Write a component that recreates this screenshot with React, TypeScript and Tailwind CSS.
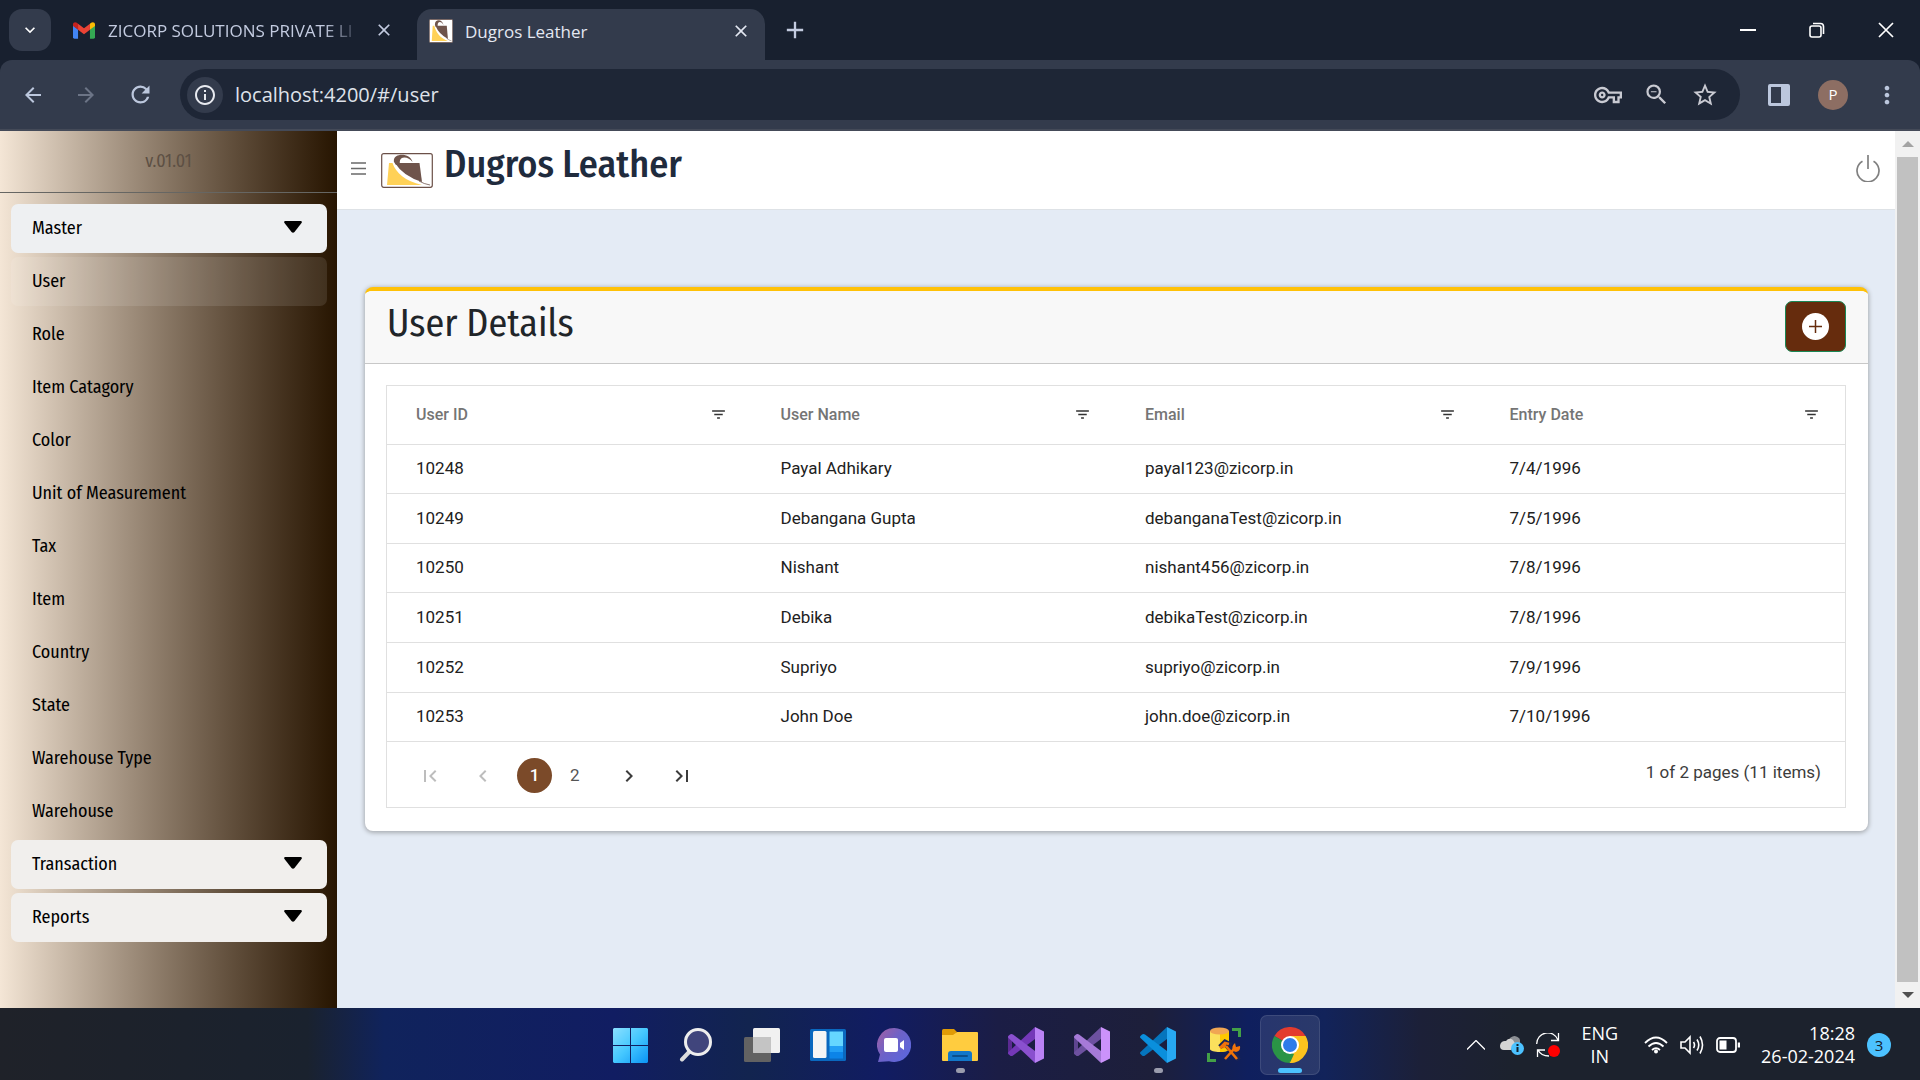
import React from "react";
import {
  MdArrowBack,
  MdArrowForward,
  MdRefresh,
  MdOutlineVpnKey,
  MdZoomOut,
  MdStarOutline,
  MdFilterList,
  MdFirstPage,
  MdChevronLeft,
  MdChevronRight,
  MdLastPage,
  MdClose,
  MdAdd,
  MdInfoOutline,
  MdMoreVert,
  MdKeyboardArrowDown,
} from "react-icons/md";

const masterItems = [
  "User",
  "Role",
  "Item Catagory",
  "Color",
  "Unit of Measurement",
  "Tax",
  "Item",
  "Country",
  "State",
  "Warehouse Type",
  "Warehouse",
];

const columns = ["User ID", "User Name", "Email", "Entry Date"];

const users = [
  ["10248", "Payal Adhikary", "payal123@zicorp.in", "7/4/1996"],
  ["10249", "Debangana Gupta", "debanganaTest@zicorp.in", "7/5/1996"],
  ["10250", "Nishant", "nishant456@zicorp.in", "7/8/1996"],
  ["10251", "Debika", "debikaTest@zicorp.in", "7/8/1996"],
  ["10252", "Supriyo", "supriyo@zicorp.in", "7/9/1996"],
  ["10253", "John Doe", "john.doe@zicorp.in", "7/10/1996"],
];

function BagMark({ className }: { className: string }) {
  return (
    <svg viewBox="0 0 52 35" preserveAspectRatio="none" className={className} aria-hidden="true">
      <rect x="0.7" y="0.7" width="50.6" height="33.6" rx="2" fill="#fff" stroke="#6b5048" strokeWidth="1.2" />
      <path d="M14 10 L38.500 10 L41 29 Q22 23 14 10Z" fill="#6f544b" />
      <path d="M13 9 C11 0 29 -1 31.500 9 C27 2.500 17 3 19 11 L15 12Z" fill="#6f544b" />
      <path d="M8 10 L11.500 10 C15 20 24 28 41 32 L6 32Z" fill="#ffd157" />
      <path d="M38 28 Q43 31 49 32" fill="none" stroke="#6f544b" strokeWidth="0.8" />
    </svg>
  );
}

function GmailMark() {
  return (
    <svg viewBox="0 0 24 18" className="h-[17px] w-[22px] shrink-0" aria-hidden="true">
      <path d="M0 3v13.400a1.600 1.600 0 0 0 1.600 1.600H5.500V8Z" fill="#4285f4" />
      <path d="M24 3v13.400a1.600 1.600 0 0 1-1.600 1.600H18.500V8Z" fill="#34a853" />
      <path d="M18.500 1.600V8.300L24 4.200V2.200C24 0 21.400-.8 19.800.6Z" fill="#fbbc04" />
      <path d="M5.500 8.300V1.600L12 6.500l6.500-4.900v6.700L12 13.200Z" fill="#ea4335" />
      <path d="M0 2.200v2l5.500 4.100V1.600L4.200.6C2.600-.7 0 0 0 2.200Z" fill="#c5221f" />
    </svg>
  );
}

function TabStrip() {
  return (
    <div className="flex h-[60px] items-stretch bg-[#18202f] text-[#c3cbe0]">
      <button aria-label="Search tabs" className="mx-[9px] my-[9px] flex size-[42px] shrink-0 items-center justify-center rounded-[13px] bg-[#333b4c] text-white">
        <MdKeyboardArrowDown className="size-5" />
      </button>
      <div className="flex w-[357px] shrink-0 items-center pl-[13px] pr-[22px]">
        <GmailMark />
        <span className="ml-[13px] w-[254px] shrink-0 whitespace-nowrap pt-0.5 text-[17px] mask-r-from-85%">
          ZICORP SOLUTIONS PRIVATE LI
        </span>
        <button aria-label="Close tab" className="ml-3">
          <MdClose className="size-5" />
        </button>
      </div>
      <div className="mt-[9px] flex w-[348px] shrink-0 items-center rounded-t-[15px] bg-[#333b4c] px-3 pb-2 text-[#e4e8f2]">
        <BagMark className="h-6 w-6" />
        <span className="ml-3 grow pt-0.5 text-[17px] leading-6">Dugros Leather</span>
        <button aria-label="Close tab" className="mr-0.5">
          <MdClose className="size-5" />
        </button>
      </div>
      <button aria-label="New tab" className="ml-4 flex items-center">
        <MdAdd className="size-7" />
      </button>
      <div className="ml-auto flex items-center text-white">
        <button aria-label="Minimize" className="flex w-[69px] justify-center">
          <svg viewBox="0 0 16 16" className="size-4"><path d="M0 8h16" stroke="currentColor" strokeWidth="2" /></svg>
        </button>
        <button aria-label="Restore" className="flex w-[69px] justify-center">
          <svg viewBox="0 0 16 16" className="size-4" fill="none" stroke="currentColor" strokeWidth="1.600">
            <rect x="1" y="4" width="11" height="11" rx="2" />
            <path d="M4 1.500h7.500a3 3 0 0 1 3 3V12" />
          </svg>
        </button>
        <button aria-label="Close window" className="flex w-[69px] justify-center">
          <svg viewBox="0 0 16 16" className="size-4"><path d="M1 1l14 14M15 1L1 15" stroke="currentColor" strokeWidth="1.700" /></svg>
        </button>
      </div>
    </div>
  );
}

function Toolbar() {
  return (
    <div className="bg-[#18202f]">
      <div className="flex h-[71px] items-center rounded-t-[12px] border-b-2 border-[#444a58] bg-[#333b4c] text-[#bcc7dd]">
        <button aria-label="Back" className="ml-[21px]"><MdArrowBack className="size-6" /></button>
        <button aria-label="Forward" className="ml-[29px] text-[#6c7486]"><MdArrowForward className="size-6" /></button>
        <button aria-label="Reload" className="ml-[29px]"><MdRefresh className="size-[27px]" /></button>
        <div className="ml-[26px] flex h-[51px] grow items-center rounded-full bg-[#1e2636] pl-[7px] pr-[21px]">
          <button aria-label="Site information" className="flex size-9 items-center justify-center rounded-full bg-[#333b4c] text-[#e8eaf0]">
            <MdInfoOutline className="size-6" />
          </button>
          <input
            aria-label="Address"
            defaultValue="localhost:4200/#/user"
            className="ml-3 min-w-0 grow bg-transparent text-[20px] text-[#dfe2ea] outline-none"
          />
          <div className="flex items-center gap-5 text-[#c9cad2]">
            <button aria-label="Passwords"><MdOutlineVpnKey className="size-[28px]" /></button>
            <button aria-label="Zoom"><MdZoomOut className="size-[29px] p-px" /></button>
            <button aria-label="Bookmark"><MdStarOutline className="size-[28px]" /></button>
          </div>
        </div>
        <button aria-label="Side panel" className="ml-7">
          <svg viewBox="0 0 22 22" className="size-[22px]"><path fillRule="evenodd" d="M2 0h18a2 2 0 0 1 2 2v18a2 2 0 0 1-2 2H2a2 2 0 0 1-2-2V2a2 2 0 0 1 2-2Zm1 3v16h10V3Z" fill="currentColor" /></svg>
        </button>
        <button aria-label="Profile" className="ml-7 flex size-[30px] items-center justify-center rounded-full bg-[#8d6e63] text-[15px] text-white">P</button>
        <button aria-label="Menu" className="ml-[25px] mr-[19px]"><MdMoreVert className="size-7" /></button>
      </div>
    </div>
  );
}

function GroupButton({ label, active }: { label: string; active?: boolean }) {
  return (
    <button
      aria-expanded={!!active}
      className={
        active
          ? "flex h-[49px] w-full items-center justify-between rounded-[7px] bg-[#eef0f2] pl-[21px] pr-[25px]"
          : "flex h-[49px] w-full items-center justify-between rounded-[7px] bg-[#f1efed] pl-[21px] pr-[25px]"
      }
    >
      <span>{label}</span>
      <svg viewBox="0 0 18 12" className="mb-[3px] h-3 w-[18px]" aria-hidden="true">
        <path d="M1 0h16q1.500.5.500 2L10.500 11q-1.500 1.500-3 0L.5 2Q-.5.5 1 0Z" />
      </svg>
    </button>
  );
}

function Sidebar() {
  return (
    <aside className="w-[337px] shrink-0 bg-linear-to-r from-[#f4e6d6] to-[#271502] font-['Fira_Sans_Condensed','Roboto_Condensed','Liberation_Sans_Narrow',sans-serif] text-[18px] text-black">
      <div className="flex h-[62px] items-center justify-center border-b border-[#666663] text-[#5d5044]">v.01.01</div>
      <nav className="flex flex-col gap-1 pb-4 pl-[11px] pr-2.5 pt-[11px]">
        <GroupButton label="Master" active />
        {masterItems.map((item, i) => (
          <a
            key={item}
            href="#/user"
            className={
              i === 0
                ? "flex h-[49px] items-center rounded-[7px] bg-white/10 pl-[21px]"
                : "flex h-[49px] items-center rounded-[7px] pl-[21px]"
            }
          >
            {item}
          </a>
        ))}
        <GroupButton label="Transaction" />
        <GroupButton label="Reports" />
      </nav>
    </aside>
  );
}

function AppHeader() {
  return (
    <header className="flex h-[79px] items-center border-b border-[#dee2e6] bg-white pl-3.5 pr-[15px]">
      <button aria-label="Toggle menu" className="mb-1">
        <svg viewBox="0 0 15 13" className="h-[13px] w-[15px]" stroke="#6a6a6a" strokeWidth="1.300"><path d="M0 1h15M0 6.500h15M0 12h15" /></svg>
      </button>
      <BagMark className="ml-[15px] h-[35px] w-[52px]" />
      <h1 className="mb-3 ml-[11px] font-['Fira_Sans_Condensed','Roboto_Condensed','Liberation_Sans_Narrow',sans-serif] text-[38px] font-medium leading-[48px] text-[#1f2b3d]">
        Dugros Leather
      </h1>
      <button aria-label="Log out" className="mb-1 ml-auto">
        <svg viewBox="0 0 24 28" className="h-7 w-6" fill="none" stroke="#808080" strokeWidth="1.700">
          <path d="M12 1v14M6.500 7.200a11 11 0 1 0 11 0" />
        </svg>
      </button>
    </header>
  );
}

function UserCard() {
  return (
    <section className="ml-7 mr-[27px] mt-[77px] overflow-hidden rounded-[8px] border-t-4 border-[#ffc107] bg-white shadow-[0_1px_4px_1px_#a9adb2]">
      <div className="flex h-[73px] items-start justify-between border-b border-[#c8c8c8] bg-[#f8f8f8] pl-[22px] pr-[22px] pt-[10px]">
        <h2 className="font-['Fira_Sans_Condensed','Roboto_Condensed','Liberation_Sans_Narrow',sans-serif] text-[38px] leading-[44px] text-[#212529]">
          User Details
        </h2>
        <button aria-label="Add user" className="flex h-[51px] w-[61px] items-center justify-center rounded-[7px] border border-[#198754] bg-[#662c0d]">
          <svg viewBox="0 0 27 27" className="size-[27px]">
            <circle cx="13.500" cy="13.500" r="13.500" fill="#fff" />
            <path d="M13.500 7v13M7 13.500h13" stroke="#662c0d" strokeWidth="1.500" />
          </svg>
        </button>
      </div>
      <div className="mb-[23px] ml-[21px] mr-[22px] mt-[21px] border border-[#e0e0e0]">
        <table className="h-[355px] w-full table-fixed border-collapse text-left font-['Roboto',sans-serif] text-[17px] text-[#212121]">
          <thead>
            <tr className="h-[58px]">
              {columns.map((c) => (
                <th key={c} className="pl-[29px] pr-[25px] text-[16px] font-medium text-[#757575]">
                  <div className="flex items-center justify-between">
                    {c}
                    <button aria-label={"Filter " + c} className="text-[#333]"><MdFilterList className="size-[17px]" /></button>
                  </div>
                </th>
              ))}
            </tr>
          </thead>
          <tbody>
            {users.map((row) => (
              <tr key={row[0]} className="border-t border-[#e0e0e0]">
                {row.map((cell, i) => (
                  <td key={i} className="pl-[29px]">{cell}</td>
                ))}
              </tr>
            ))}
          </tbody>
        </table>
        <div className="flex h-[66px] items-center border-t border-[#e0e0e0] pl-[31px] pr-6 font-['Roboto',sans-serif] text-[17px] text-[#3c3c3c]">
          <nav aria-label="Pages" className="flex items-center pt-0.5">
            <button aria-label="First page" disabled className="text-[#bdbdbd]"><MdFirstPage className="size-6" /></button>
            <button aria-label="Previous page" disabled className="ml-[29px] text-[#bdbdbd]"><MdChevronLeft className="size-6" /></button>
            <button aria-current="page" className="ml-[22px] flex size-[35px] items-center justify-center rounded-full bg-[#7b4a29] font-medium text-white">1</button>
            <button className="ml-[18px] text-[#555]">2</button>
            <button aria-label="Next page" className="ml-[37px]"><MdChevronRight className="size-6" /></button>
            <button aria-label="Last page" className="ml-[29px]"><MdLastPage className="size-6" /></button>
          </nav>
          <span className="ml-auto pb-1">1 of 2 pages (11 items)</span>
        </div>
      </div>
    </section>
  );
}

function Scrollbar() {
  return (
    <div className="flex w-[25px] shrink-0 flex-col items-center bg-[#f1f1f1]">
      <svg viewBox="0 0 12 6" className="my-[10px] h-[6px] w-3"><path d="M6 0l6 6H0Z" fill="#a3a3a3" /></svg>
      <div className="w-[21px] grow bg-[#c1c1c1]" />
      <svg viewBox="0 0 12 6" className="my-[10px] h-[6px] w-3"><path d="M0 0h12L6 6Z" fill="#505050" /></svg>
    </div>
  );
}

function StudioMark({ block, rise, fall, edge }: { block: string; rise: string; fall: string; edge?: string }) {
  return (
    <svg viewBox="0 0 36 36" className="size-9">
      {edge && <path d="M0 9l4-2v22l-4-2Z" fill={edge} />}
      <path d="M27 0v12L5 28.500q-1.500 1-3 0L.5 27q-1-1 0-2Z" fill={rise} />
      <path d="M27 36V24L5 7.500q-1.500-1-3 0L.5 9q-1 1 0 2Z" fill={fall} />
      <path d="M27 0l9 4.500v27L27 36Z" fill={block} />
    </svg>
  );
}

const taskIcons = [
  {
    name: "Start",
    icon: (
      <svg viewBox="0 0 35 35" className="size-[35px]">
        <defs><linearGradient id="win" x1="0" y1="0" x2="1" y2="1"><stop stopColor="#8be0ff" /><stop offset=".5" stopColor="#45c8ff" /><stop offset="1" stopColor="#0a93f5" /></linearGradient></defs>
        <path d="M1 0h16v17H0V1Zm17 0h16l1 1v16H18ZM0 18h17v17H1l-1-1Zm18 0h17v16l-1 1H18Z" fill="url(#win)" />
      </svg>
    ),
  },
  {
    name: "Search",
    icon: (
      <svg viewBox="0 0 34 34" className="size-[34px]">
        <path d="M12 22L3 31.500" stroke="#dcdcdc" strokeWidth="4" strokeLinecap="round" />
        <circle cx="19" cy="14" r="12.500" fill="#40457c" stroke="#eee" strokeWidth="3" />
      </svg>
    ),
  },
  {
    name: "Task view",
    icon: (
      <svg viewBox="0 0 36 34" className="h-[34px] w-9">
        <rect y="9" width="27" height="25" rx="1.500" fill="#626262" />
        <rect x="9" width="27" height="25" rx="1.500" fill="#f1f1f1" />
        <path d="M9 9h18v16H10.500Q9 25 9 23.500Z" fill="#c4c4c4" />
      </svg>
    ),
  },
  {
    name: "Widgets",
    icon: (
      <svg viewBox="0 0 36 32" className="h-8 w-9">
        <rect width="36" height="32" rx="1.500" fill="#0a68bf" />
        <rect x="3" y="2" width="13.500" height="27" rx="1.500" fill="#f5f5f5" />
        <path d="M19.500 2.500h13.500V17H19.500Z" fill="#65d6ff" />
        <path d="M19.500 17h13.500v6H19.500Z" fill="#229ff5" />
        <path d="M19.500 23h13.500v6.500H19.500Z" fill="#0c84e8" />
      </svg>
    ),
  },
  {
    name: "Chat",
    icon: (
      <svg viewBox="0 0 34 34" className="size-[34px]">
        <defs><linearGradient id="chat" x1="0" y1="0" x2="1" y2=".8"><stop stopColor="#a45fa0" /><stop offset=".5" stopColor="#6d62c8" /><stop offset="1" stopColor="#5b67dd" /></linearGradient></defs>
        <path d="M17 0a17 17 0 1 1-5 33.200L1 34l2-7.500A17 17 0 0 1 17 0Z" fill="url(#chat)" />
        <rect x="7" y="10" width="14" height="14" rx="2" fill="#fff" />
        <path d="M23 15l4-3v10l-4-3Z" fill="#fff" />
      </svg>
    ),
  },
  {
    name: "File Explorer",
    dot: true,
    icon: (
      <svg viewBox="0 0 36 32" className="h-8 w-9">
        <path d="M0 1.500Q0 0 1.500 0H12l3 3-3 4H0Z" fill="#e09b06" />
        <path d="M0 6h11l4-3h20q1 0 1 1v27q0 1-1 1H1q-1 0-1-1Z" fill="#ffcc3f" />
        <path d="M6 32V25q0-3 3-3h18q3 0 3 3v7Z" fill="#1277c9" />
        <path d="M11 27h14" stroke="#0b4f8c" strokeWidth="2" strokeLinecap="round" />
      </svg>
    ),
  },
  { name: "Visual Studio", icon: <StudioMark block="#ba82f5" rise="#7438b8" fall="#8a50cf" edge="#5b2a91" /> },
  { name: "Visual Studio 2022", icon: <StudioMark block="#cb92fa" rise="#6d51a0" fall="#a67ad8" edge="#5e4590" /> },
  { name: "Visual Studio Code", dot: true, icon: <StudioMark block="#27a8f2" rise="#0575bd" fall="#0a8fdc" /> },
  {
    name: "Database tools",
    icon: (
      <svg viewBox="0 0 36 36" className="size-9">
        <path d="M4 4v18c0 4 19 4 19 0V4Z" fill="#fbe05c" />
        <path d="M14 4v21c5 0 9-1 9-3V4Z" fill="#fdc800" />
        <ellipse cx="13.500" cy="4" rx="9.500" ry="3.600" fill="#f0a653" />
        <path d="M26 2.500h7.500V10M2.500 26v7.500H10" fill="none" stroke="#43a047" strokeWidth="3" />
        <path d="M14 20l5-5 4 2-1 3L33 33" fill="none" stroke="#1b2555" strokeWidth="5" />
        <path d="M14 21l5-5 4 1M19 17l-2 4M20 19l11 13M19 32l9-10" fill="none" stroke="#f0730a" strokeWidth="2.600" />
        <path d="M27 24q-2-5 2-8l1 4 4-1q1 5-4 6Z" fill="#f0730a" />
      </svg>
    ),
  },
  {
    name: "Chrome",
    active: true,
    icon: (
      <svg viewBox="0 0 36 36" className="size-9">
        <path d="M18 18L2.400 9A18 18 0 0 1 33.600 9Z" fill="#e33b2e" />
        <path d="M18 18L18 9H33.600A18 18 0 0 1 18 36Z" fill="#fcc31e" />
        <path d="M18 18l-3 9 3 9A18 18 0 0 1 2.400 9Z" fill="#2a9446" />
        <path d="M25.800 22.500L18 36l-3-8Z" fill="#fcc31e" />
        <path d="M10.200 22.500L18 36l4-9Z" fill="#2a9446" />
        <path d="M25.800 22.500L18 36a18 18 0 0 0 5-1Z" fill="#fcc31e" />
        <circle cx="18" cy="18" r="9" fill="#fff" />
        <circle cx="18" cy="18" r="7" fill="#2f7bea" />
      </svg>
    ),
  },
];

function Taskbar() {
  return (
    <footer className="grid h-[72px] shrink-0 grid-cols-[1fr_auto_1fr] items-center bg-[linear-gradient(90deg,#1f2229_0%,#1a222e_16%,#10235c_20%,#111d62_32%,#12244f_39%,#111c62_46%,#1b1d45_52%,#1d1f3a_60%,#0f1f5e_65%,#12235a_69%,#1c2038_74%,#1c222d_79%)] pt-0.5 text-white">
      <div />
      <div className="flex">
        {taskIcons.map((t) => (
          <button
            key={t.name}
            aria-label={t.name}
            className={
              t.active
                ? "relative mx-[3px] flex size-[60px] items-center justify-center rounded-[7px] border border-white/10 bg-white/10"
                : "relative mx-[3px] flex size-[60px] items-center justify-center"
            }
          >
            {t.icon}
            {t.dot && <span className="absolute bottom-[2px] h-[5px] w-[9px] rounded-full bg-[#9a9cad]" />}
            {t.active && <span className="absolute bottom-px h-[5px] w-6 rounded-full bg-[#4cc2ff]" />}
          </button>
        ))}
      </div>
      <div className="flex items-center justify-end pr-[29px] text-[18px] leading-[23px]">
        <svg viewBox="0 0 18 10" className="h-[10px] w-[18px]" fill="none" stroke="#fff" strokeWidth="1.300"><path d="M0 9.500l9-9 9 9" /></svg>
        <svg viewBox="0 0 24 20" className="ml-[15px] h-5 w-6">
          <path d="M10 3a6 6 0 0 1 10 2v7H7Z" fill="#8c8f94" />
          <path d="M0 11a5 5 0 0 1 6-5Q9 2 13 5l3 5-5 5H4a4 4 0 0 1-4-4Z" fill="#d4d4d4" />
          <circle cx="17.500" cy="13.500" r="6.500" fill="#4cc2ff" />
          <path d="M17.500 12v5M17.500 9v2" stroke="#12202c" strokeWidth="2" />
        </svg>
        <svg viewBox="0 0 24 24" className="ml-3 size-6" fill="none" stroke="#fff" strokeWidth="1.300">
          <path d="M.7 11A11 11 0 0 1 22 7M22.500 0v7.500H15M13 23Q5 23 2 17M1.500 24v-7H9" />
          <circle cx="18" cy="18" r="6" fill="#f00" stroke="none" />
        </svg>
        <div className="ml-[21px] text-center">ENG<br />IN</div>
        <svg viewBox="0 0 24 18" className="ml-[26px] h-[18px] w-6" fill="none" stroke="#fff" strokeWidth="1.800">
          <path d="M1 7Q12-4 23 7M4.500 10.500q7.500-7 15 0M8 14q4-3.500 8 0" />
          <circle cx="12" cy="15.500" r="2" fill="#fff" stroke="none" />
        </svg>
        <svg viewBox="0 0 24 20" className="ml-3 h-5 w-6" fill="none" stroke="#fff" strokeWidth="1.600">
          <path d="M1 7v6h4l5 5V2L5 7ZM13.500 7q2 3 0 6M17 4.500q3.500 5.500 0 11M20 1.500q5 8.500 0 17" />
        </svg>
        <svg viewBox="0 0 24 16" className="ml-3 h-4 w-6" fill="none" stroke="#fff" strokeWidth="1.800">
          <rect x="1" y="1" width="19" height="14" rx="3" />
          <path d="M23 5.500v5" strokeWidth="2.500" />
          <rect x="3.500" y="3.500" width="7" height="9" fill="#fff" stroke="none" />
        </svg>
        <div className="ml-[21px] text-right">18:28<br />26-02-2024</div>
        <span className="ml-3 flex size-6 items-center justify-center rounded-full bg-[#4cc2ff] text-[15px] text-[#16202c]">3</span>
      </div>
    </footer>
  );
}

export default function App() {
  return (
    <div className="flex h-screen flex-col overflow-hidden font-['Open_Sans','Noto_Sans',sans-serif]">
      <TabStrip />
      <Toolbar />
      <div className="flex min-h-0 grow">
        <Sidebar />
        <main className="min-w-0 grow bg-[#e4ebf5]">
          <AppHeader />
          <UserCard />
        </main>
        <Scrollbar />
      </div>
      <Taskbar />
    </div>
  );
}
